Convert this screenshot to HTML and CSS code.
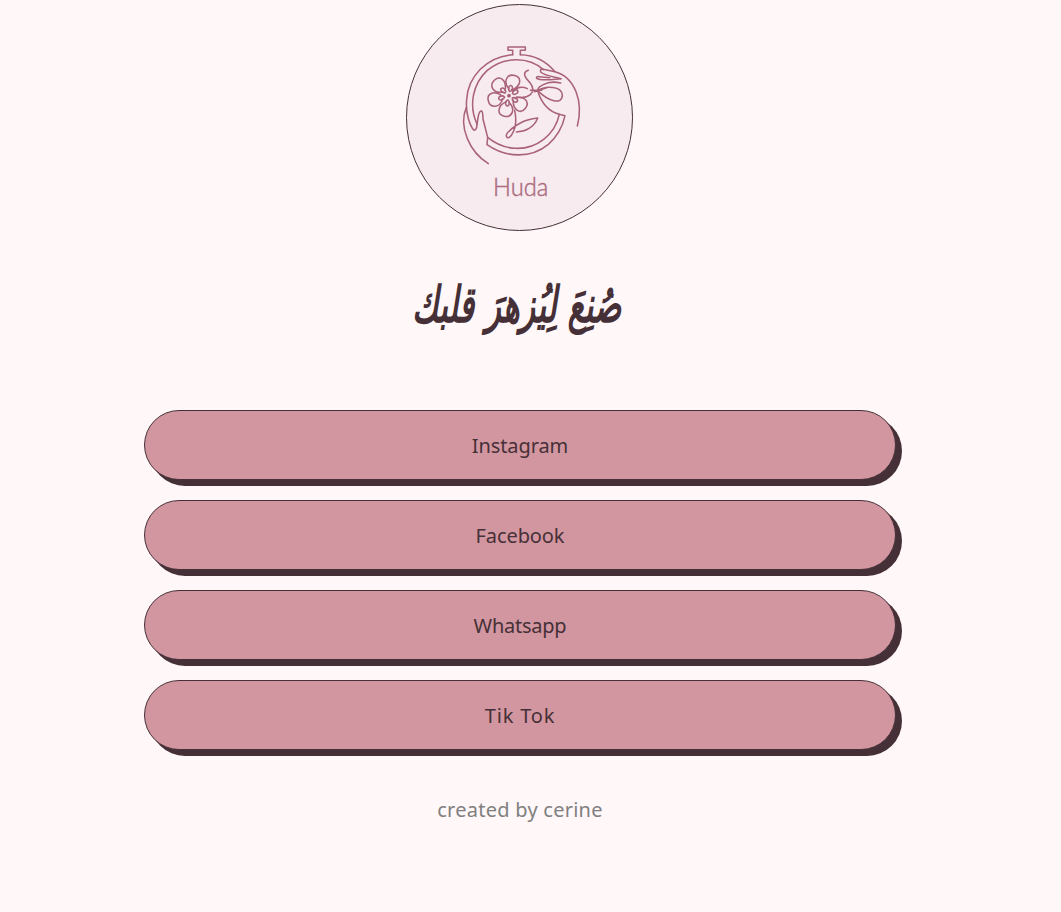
FILE: index.html
```html
<!DOCTYPE html>
<html lang="en">
<head>
<meta charset="utf-8">
<title>Huda</title>
<link rel="stylesheet" href="styles.css">
</head>
<body>
<main class="page">
  <svg class="logo" viewBox="18 12 681 681" role="img" aria-label="Huda">
    <defs>
      <path id="bud" d="M-1 -13C-9 -17 -8 -31 -2 -31C7 -30 6 -15 -1 -13"/>
      <path id="petal" d="M-5 -20C-30 -34 -24 -63 0 -63C24 -63 27 -36 3 -19"/>
    </defs>
    <circle class="logo-disc" cx="358.500" cy="352.500" r="339"/>
    <g class="logo-lines">
      <path d="M338 164V151H324V141H376V151H361V164"/>
      <path d="M338 164C259 170 204 230 200 298C196 340 210 378 222 391Q231 390 231 372"/>
      <path d="M361 164C401 165 439 184 465 215"/>
      <path d="M231 372C205 316 219 251 261 212C310 169 386 169 430 209"/>
      <path d="M231 372L235 348Q238 332 245 333Q249 337 249 357L263 412L261 434C318 474 393 476 445 433Q484 399 495 347L478 343C446 334 424 308 413 272"/>
      <path d="M263 412C313 453 381 457 431 418Q468 389 478 343"/>
      <path d="M199 322C174 381 210 457 265 491"/>
      <path d="M483 236C455 229 431 226 422 216Q420 207 426 207L465 215C525 231 551 306 532 378"/>
      <path d="M483 236C451 239 425 244 410 235Q407 229 418 230L449 233M482 249Q451 242 430 254Q413 262 413 272"/>
      <path d="M391 271H425M413 272C437 256 486 258 487 286C486 316 445 304 413 272M403 275L440 263"/>
      <path d="M385 211C364 218 377 236 389 247Q407 270 391 284Q375 297 350 291"/>
      <g transform="translate(326 287)">
        <g transform="rotate(17)"><use href="#petal"/><use href="#bud"/></g>
        <g transform="rotate(-43)"><use href="#petal"/><use href="#bud"/></g>
        <g transform="rotate(-104)"><use href="#petal"/><use href="#bud"/></g>
        <g transform="rotate(-168)"><use href="#petal"/><use href="#bud"/></g>
        <g transform="rotate(127)"><use href="#petal"/><use href="#bud"/></g>
        <g transform="rotate(65)"><use href="#bud"/></g>
      </g>
      <path d="M382 266C365 258 345 263 337 274"/>
      <circle class="logo-dot" cx="327" cy="287" r="3.500"/>
      <path d="M344 331Q350 358 345 382Q334 416 322 413Q313 405 330 391Q343 378 367 366Q382 358 413 354Q406 374 386 386Q371 395 349 396"/>
    </g>
    <text class="logo-name" x="279" y="589" textLength="166" lengthAdjust="spacingAndGlyphs">Huda</text>
  </svg>
  <h1 class="tagline" lang="ar" dir="rtl">صُنِعَ لِيُزهرَ قلبك</h1>
  <nav class="links">
    <a class="link">Instagram</a>
    <a class="link">Facebook</a>
    <a class="link link-snug">Whatsapp</a>
    <a class="link link-wide">Tik Tok</a>
  </nav>
  <footer class="credit">created by cerine</footer>
</main>
</body>
</html>
```
FILE: styles.css
```css
* { box-sizing: border-box; }

body {
  margin: 0;
  background: #fff7f8;
  color: #463037;
  font-family: "Noto Sans", sans-serif;
}

.page {
  display: flex;
  flex-direction: column;
  align-items: center;
  width: 1040px;
  height: 912px;
  padding-top: 4px;
}

.logo {
  width: 227px;
  height: 227px;
  flex: none;
  margin-right: 1px;
}

.logo-disc {
  fill: #f7ebf0;
  stroke: #463037;
  stroke-width: 3;
}

.logo-lines {
  fill: none;
  stroke: #a96278;
  stroke-width: 4.6;
  stroke-linecap: round;
  stroke-linejoin: round;
}

.logo-dot { fill: #a96278; }

.logo-name {
  fill: #ad6d80;
  stroke: #ad6d80;
  stroke-width: 1.5;
  font: 300 78px Lato, sans-serif;
}

.tagline {
  margin: 34px 0 0;
  height: 80px;
  font: italic bold 41px/80px "DejaVu Sans", sans-serif;
  white-space: nowrap;
  transform: translateX(-3px) scale(0.776, 1.22);
}

.links {
  display: grid;
  gap: 20px;
  width: 752px;
  margin-top: 65px;
}

.link {
  display: flex;
  align-items: center;
  justify-content: center;
  height: 70px;
  border: 1px solid #463037;
  border-radius: 35px;
  background: #d296a0;
  box-shadow: 6px 6px 0 #463037;
  font-size: 20px;
  letter-spacing: -0.1px;
}

.link-snug { letter-spacing: -0.25px; }

.link-wide { letter-spacing: 0.8px; }

.credit {
  margin-top: 46px;
  color: #808080;
  font-size: 20px;
  line-height: 28px;
  letter-spacing: 0.25px;
}
```
